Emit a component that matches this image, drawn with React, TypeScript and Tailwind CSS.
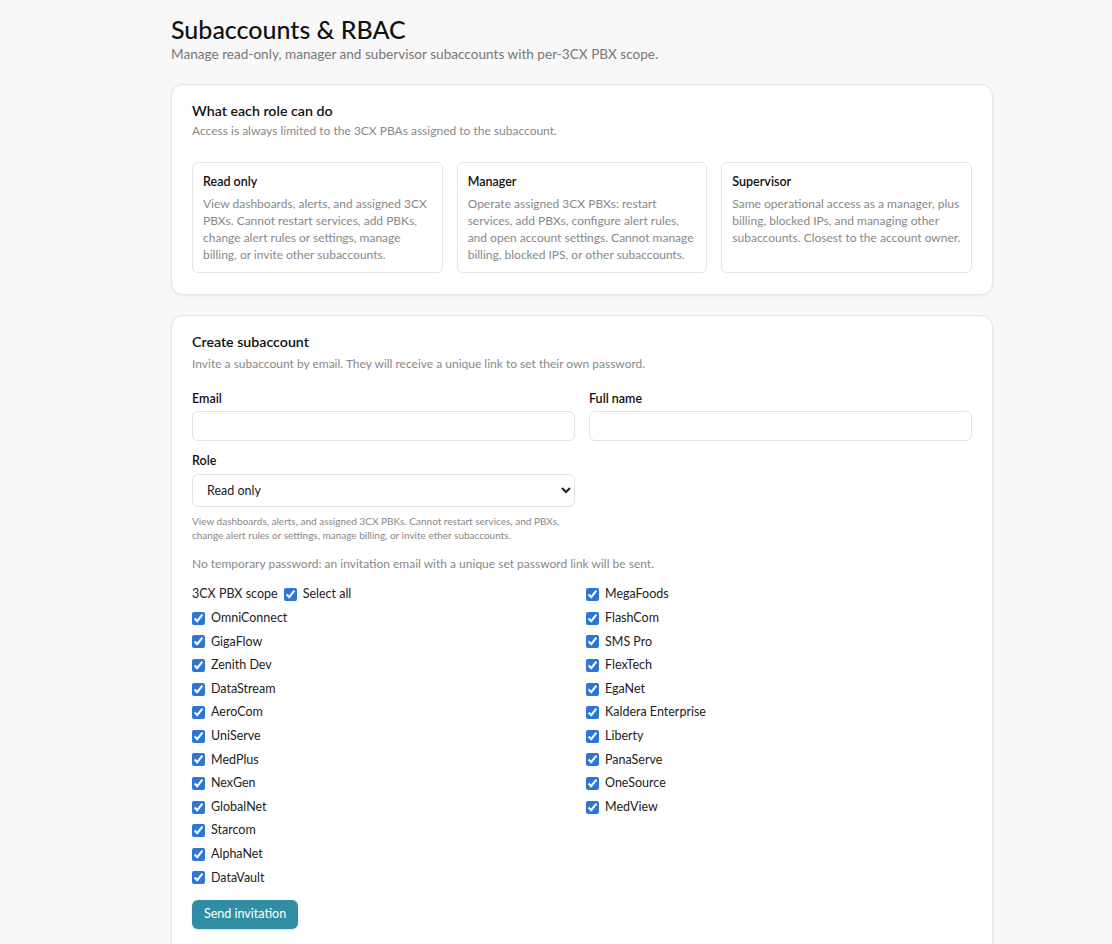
const roles = [
  {
    name: "Read only",
    text: "View dashboards, alerts, and assigned 3CX PBXs. Cannot restart services, add PBKs, change alert rules or settings, manage billing, or invite other subaccounts.",
  },
  {
    name: "Manager",
    text: "Operate assigned 3CX PBXs: restart services, add PBXs, configure alert rules, and open account settings. Cannot manage billing, blocked IPS, or other subaccounts.",
  },
  {
    name: "Supervisor",
    text: "Same operational access as a manager, plus billing, blocked IPs, and managing other subaccounts. Closest to the account owner.",
  },
];

const leftPbx = ["OmniConnect", "GigaFlow", "Zenith Dev", "DataStream", "AeroCom", "UniServe", "MedPlus", "NexGen", "GlobalNet", "Starcom", "AlphaNet", "DataVault"];
const rightPbx = ["MegaFoods", "FlashCom", "SMS Pro", "FlexTech", "EgaNet", "Kaldera Enterprise", "Liberty", "PanaServe", "OneSource", "MedView"];

const Check = ({label}: {label: string}) => (
  <label className="flex items-center gap-[6px] h-[23.6px] text-[12.5px] text-[#222]">
    <input type="checkbox" defaultChecked className="w-[13px] h-[13px] m-0 accent-[#2b76d6]" />
    <span>{label}</span>
  </label>
);

const App = () => {
  return (
    <div className="min-h-screen bg-[#f8f8f8] font-['Lato',sans-serif] text-[#111]">
      <div className="pl-[171px] w-[993px] pt-[13px]">
        {/* Header */}
        <h1 className="text-[25px] leading-[32px] font-medium text-[#111]">Subaccounts &amp; RBAC</h1>
        <p className="text-[13.6px] leading-[18px] text-[#777]">Manage read-only, manager and subervisor subaccounts with per-3CX PBX scope.</p>

        {/* Roles */}
        <section className="mt-[21px] bg-white border border-[#e6e6e6] rounded-[12px] shadow-[0_1px_3px_rgba(0,0,0,0.06)] px-[20px] pt-[16px] pb-[21px]">
          <h2 className="text-[14.2px] leading-[20px] font-semibold">What each role can do</h2>
          <p className="text-[12px] leading-[18px] text-[#888] mt-[1px]">Access is always limited to the 3CX PBAs assigned to the subaccount.</p>
          <div className="grid grid-cols-3 gap-[14px] mt-[22px]">
            {roles.map((r) => (
              <div key={r.name} className="border border-[#e6e6e6] rounded-[6px] h-[111px] px-[10px] pt-[10px]">
                <div className="text-[12.5px] leading-[18px] font-semibold text-[#111]">{r.name}</div>
                <div className="text-[12px] leading-[17px] text-[#888] mt-[4px]">{r.text}</div>
              </div>
            ))}
          </div>
        </section>

        {/* Create subaccount */}
        <section className="mt-[20px] bg-white border border-[#e6e6e6] rounded-[12px] shadow-[0_1px_3px_rgba(0,0,0,0.06)] px-[20px] pt-[16px] pb-[40px]">
          <h2 className="text-[14.2px] leading-[20px] font-semibold">Create subaccount</h2>
          <p className="text-[12px] leading-[18px] text-[#888] mt-[3px]">Invite a subaccount by email. They will receive a unique link to set their own password.</p>

          <div className="grid grid-cols-2 gap-x-[14px] mt-[17px]">
            <div>
              <label className="block text-[12.5px] leading-[18px] font-semibold">Email</label>
              <input className="mt-[3px] w-full h-[30px] border border-[#e2e2e2] rounded-[6px] px-[10px] text-[13px] outline-none" />
            </div>
            <div>
              <label className="block text-[12.5px] leading-[18px] font-semibold">Full name</label>
              <input className="mt-[3px] w-full h-[30px] border border-[#e2e2e2] rounded-[6px] px-[10px] text-[13px] outline-none" />
            </div>
            <div className="mt-[11px]">
              <label className="block text-[12.5px] leading-[18px] font-semibold">Role</label>
              <select defaultValue="Read only" className="mt-[4px] w-full h-[33px] border border-[#e2e2e2] rounded-[6px] pl-[10px] pr-[6px] text-[12.5px] bg-white text-[#222]">
                <option>Read only</option>
                <option>Manager</option>
                <option>Supervisor</option>
              </select>
              <p className="mt-[7px] text-[10px] leading-[14px] text-[#888]">View dashboards, alerts, and assigned 3CX PBKs. Cannot restart services, and PBXs, change alert rules or settings, manage billing, or invite ether subaccounts.</p>
            </div>
          </div>

          <p className="mt-[13px] text-[12px] leading-[17px] text-[#888]">No temporary password: an invitation email with a unique set password link will be sent.</p>

          {/* Scope */}
          <div className="grid grid-cols-2 mt-[11px]">
            <div className="flex flex-col">
              <div className="flex items-center gap-[6px] h-[23.6px] text-[12.5px] text-[#222]">
                <span>3CX PBX scope</span>
                <Check label="Select all" />
              </div>
              {leftPbx.map((p) => (
                <Check key={p} label={p} />
              ))}
            </div>
            <div className="flex flex-col ml-[4px]">
              {rightPbx.map((p) => (
                <Check key={p} label={p} />
              ))}
            </div>
          </div>

          <button className="mt-[10px] h-[29px] px-[12px] rounded-[6px] bg-[#2f8ea2] text-white text-[12.5px] shadow-[0_1px_2px_rgba(0,0,0,0.15)]">Send invitation</button>
        </section>
      </div>
    </div>
  );
};

export default App;
